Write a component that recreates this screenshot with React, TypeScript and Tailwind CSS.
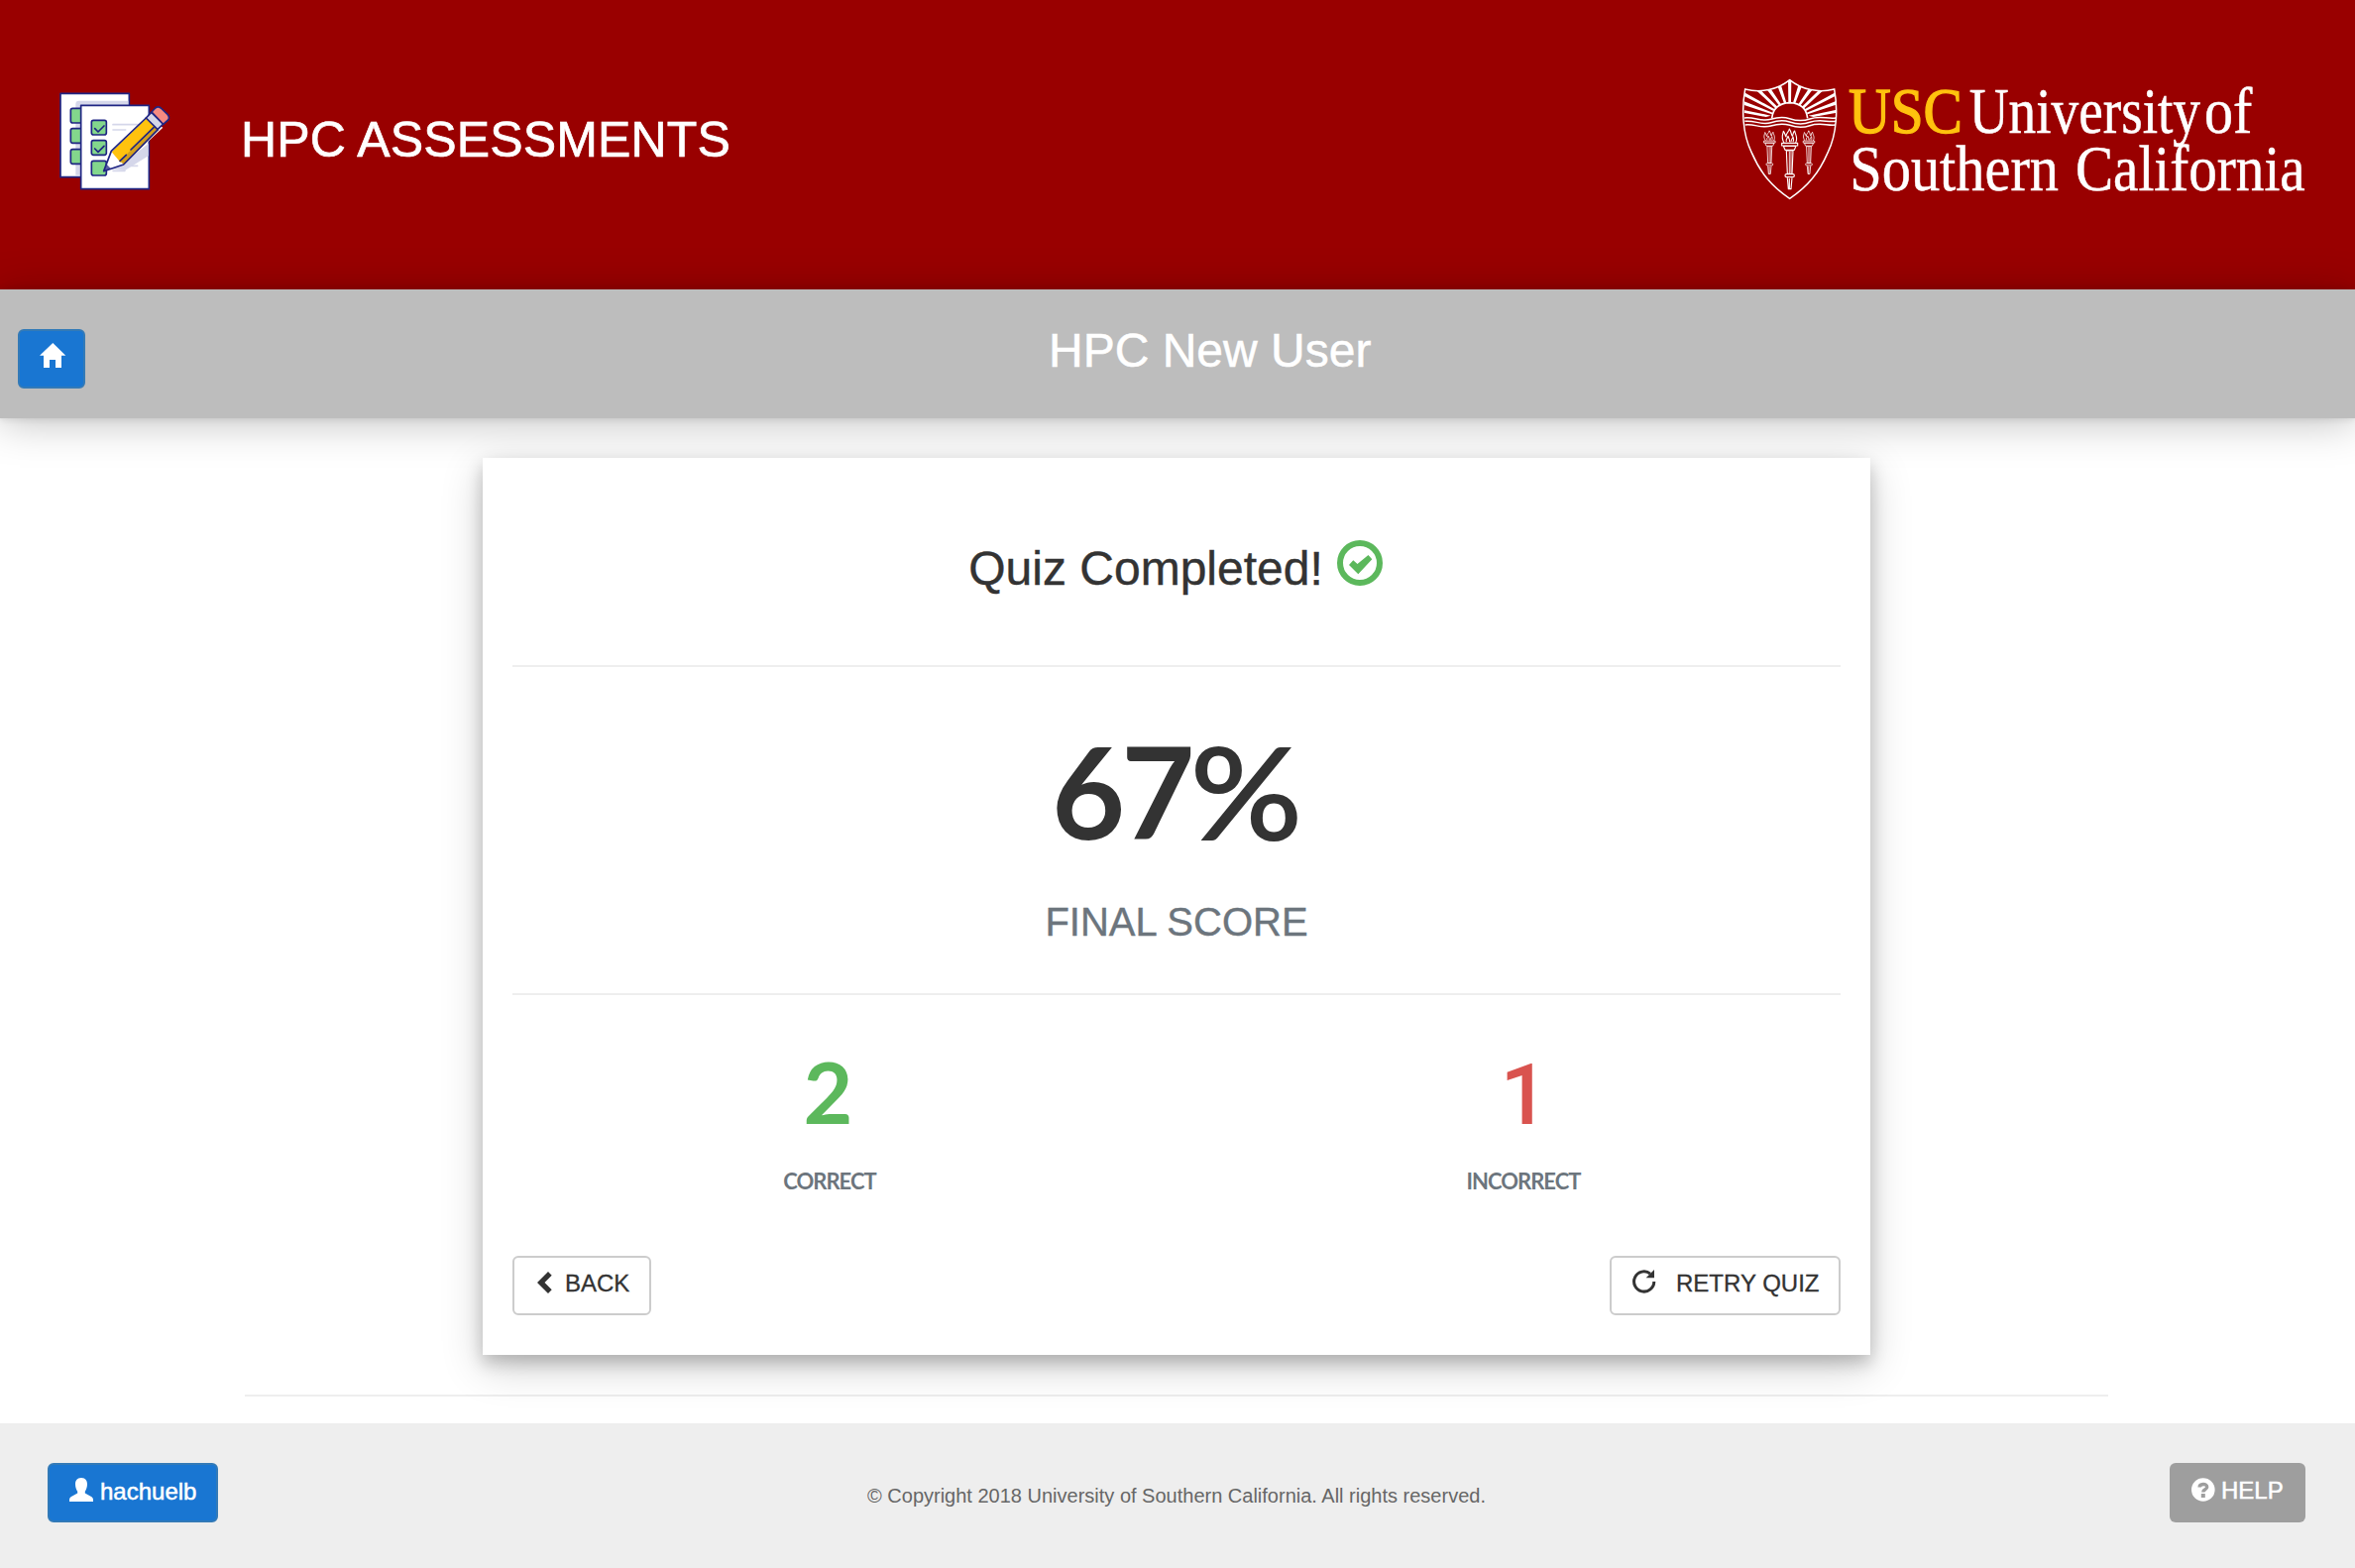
import React from "react";

function QuizLogo() {
  const boxes = [154, 215, 277];
  return (
    <svg width="150" height="140" viewBox="0 0 450 420" fill="none" stroke="#1f2583" strokeWidth="5" strokeLinejoin="round" strokeLinecap="round">
      <rect x="63" y="73" width="208" height="253" fill="#fff" />
      <path d="M109 320V105Q109 95 119 95H268V108H124V320Z" fill="#d5d7ea" stroke="none" />
      {[118, 179, 242].map((y) => (
        <rect key={y} x="94" y={y} width="50" height="44" rx="6" fill="#83d78c" />
      ))}
      <rect x="125" y="109" width="206" height="253" fill="#fff" />
      <path d="M222 167H298M222 183H260M222 292H296M222 307H258" stroke="#d5d7ea" />
      <path d="M329 225V262L258 306L205 300L250 285Z" fill="#d5d7ea" stroke="none" />
      {boxes.map((y) => (
        <rect key={y} x="157" y={y} width="45" height="44" rx="6" fill="#83d78c" />
      ))}
      <path d="M167 179L177 189L195 171M167 240L177 250L195 232" />
      <path d="M324 147L373 176L254 288L194 307L217 247Z" fill="#fff" stroke="none" />
      <path d="M324 147L356 177L245 282L218 250Z" fill="#ffc20e" stroke="none" />
      <path d="M346 172L360 184L256 288L243 278Z" fill="#d3a01c" stroke="none" />
      <path d="M203 287L216 301L194 309Z" fill="#5a5fa5" stroke="none" />
      <path d="M322 147L338 130L374 165L357 182Z" fill="#d5d7ea" />
      <path d="M339 129L350 117Q358 110 367 117L387 136Q395 145 389 153L374 166Z" fill="#f58a80" />
      <path d="M322 147L217 247L194 308L254 288L358 182" />
      <path d="M345 176L276 243M262 259L243 277" />
    </svg>
  );
}

function Torch({ x, y, s }: { x: number; y: number; s: number }) {
  return (
    <g transform={`translate(${x} ${y}) scale(${s})`} fill="none" stroke="#fff" strokeWidth="3.4" strokeLinejoin="round">
      <path d="M-17 40C-28 22 -20 14 -19 5C-14 12 -14 18 -11 22C-12 10 -2 8 -1 -2C6 8 3 14 8 20C11 14 10 8 15 4C17 16 26 24 18 40" />
      <path d="M-10 38C-14 28 -6 28 -5 20C-2 26 0 30 0 38M4 38C3 30 9 28 10 22C13 30 12 34 10 38" />
      <path d="M-24 41H24V49H-24ZM-19 50H19L14 62H-14Z" fill="#990000" />
      <path d="M-10 64L-7 134H7L10 64Z" />
      <path d="M-1 66V134M4 66V132" strokeWidth="2.6" />
      <rect x="-14" y="135" width="28" height="9" rx="4" />
      <path d="M-7 146L-4 180H4L7 146M-1 148V180" />
    </g>
  );
}

function UscLogo() {
  return (
    <svg width="630" height="140" viewBox="0 0 1890 420">
      <defs>
        <clipPath id="sky">
          <path d="M62 60C110 72 160 62 197 32C234 62 284 72 332 60Q338 100 338 145Q268 165 232 146Q197 130 160 146Q120 165 60 145Q57 100 62 60Z" />
        </clipPath>
      </defs>
      <g clipPath="url(#sky)" fill="#fff">
        <path d="M192 30H202L201 100H193ZM160 50L170 45L187 101L180 103ZM234 50L224 45L207 101L214 103ZM127 60L139 58L172 107L166 111ZM267 60L255 58L222 107L228 111ZM92 60L108 62L161 114L155 119ZM302 60L286 62L233 114L239 119ZM56 68L58 80L148 126L152 121ZM338 68L336 80L246 126L242 121ZM54 95L54 106L143 136L146 131ZM340 95L340 106L251 136L248 131ZM54 122V131L125 144L140 140ZM340 122V131L269 144L254 140Z" />
      </g>
      <path d="M143 148Q148 103 197 101Q246 103 251 148" fill="none" stroke="#fff" strokeWidth="5" />
      <g fill="none" stroke="#fff" strokeWidth="4.5">
        <path d="M60 147C90 143 112 160 140 151C165 143 178 143 197 149C220 157 235 158 258 150C290 139 310 151 337 147" />
        <path d="M61 157C90 153 112 170 140 161C165 153 178 153 197 159C220 167 235 168 258 160C290 149 310 161 337 157" />
        <path d="M62 168C90 164 112 180 140 171C165 163 178 163 197 169C220 177 235 178 258 170C290 159 310 171 335 168" />
        <path d="M62 60C110 72 160 62 197 32C234 62 284 72 332 60C343 120 340 195 313 250C285 315 250 356 197 391C144 356 109 315 81 250C54 195 51 120 62 60Z" />
      </g>
      <Torch x={197} y={182} s={1} />
      <Torch x={136} y={187} s={0.72} />
      <Torch x={255} y={187} s={0.72} />
      <g fontFamily="'Liberation Serif', serif" fontSize="196">
        <text x="375" y="192" fill="#ffc20e" stroke="#ffc20e" strokeWidth="4" textLength="345" lengthAdjust="spacingAndGlyphs">USC</text>
        <g fill="#fff" stroke="#fff" strokeWidth="1.5">
          <text x="740" y="192" textLength="700" lengthAdjust="spacingAndGlyphs">University</text>
          <text x="1452" y="192" textLength="145" lengthAdjust="spacingAndGlyphs">of</text>
          <text x="379" y="366" textLength="632" lengthAdjust="spacingAndGlyphs">Southern</text>
          <text x="1062" y="366" textLength="695" lengthAdjust="spacingAndGlyphs">California</text>
        </g>
      </g>
    </svg>
  );
}

export default function App() {
  return (
    <div className="flex h-[1582px] w-[2376px] flex-col overflow-hidden bg-white font-['Liberation_Sans',Arial,sans-serif] text-[#333333]">
      <header className="flex h-[292px] shrink-0 items-start justify-between bg-[#990000] pl-10 pt-[70px]">
        <div className="flex items-start">
          <QuizLogo />
          <h1 className="ml-[53px] mt-[43px] whitespace-nowrap text-[50px] leading-[56px] tracking-[0.15px] text-white [-webkit-text-stroke:0.7px_white]">HPC ASSESSMENTS</h1>
        </div>
        <div className="mr-[6px]">
          <UscLogo />
        </div>
      </header>

      <nav className="relative flex h-[130px] shrink-0 items-start bg-[#bdbdbd] pl-[18px] shadow-[0_0_8px_rgba(0,0,0,0.12),0_4px_40px_rgba(0,0,0,0.25)]">
        <button className="mt-10 flex h-[60px] w-[68px] items-start rounded-md border-2 border-[#337ab7] bg-[#1976d2] pl-5 pt-3">
          <svg width="27" height="25" viewBox="0 0 27 25" fill="#fff">
            <path d="M13.3 0L26.3 12.8H22V25H16V17H10V25H4V12.8H0Z" />
          </svg>
        </button>
        <h2 className="ml-[972px] mt-[36px] whitespace-nowrap text-[48px] leading-[52px] text-white [-webkit-text-stroke:0.5px_white]">HPC New User</h2>
      </nav>

      <main className="flex h-[1014px] shrink-0 flex-col items-center pr-[2px] pt-10">
        <section className="relative flex h-[905px] w-[1400px] shrink-0 flex-col bg-white shadow-[0_8px_16px_rgba(0,0,0,0.2),0_12px_40px_rgba(0,0,0,0.19)]">
          <div className="mx-[30px] flex h-[211px] items-start justify-center border-b-2 border-[#eeeeee] pr-[2px] pt-[86px]">
            <h2 className="whitespace-nowrap text-[48px] leading-[52px] [-webkit-text-stroke:0.4px_#333333]">Quiz Completed!</h2>
            <svg className="ml-[14px] mt-[-3px]" width="46" height="46" viewBox="0 0 46 46" fill="#5cb85c">
              <circle cx="23" cy="23" r="20" fill="none" stroke="#5cb85c" strokeWidth="6" />
              <path d="M12 25L16.3 20.3L20.5 24L31.5 15L35.3 19.3L21.3 34.3Z" />
            </svg>
          </div>
          <div className="mx-[30px] flex h-[331px] flex-col items-center border-b-2 border-[#eeeeee] pt-[55px]">
            <div className="whitespace-nowrap pr-[9px] font-['Lato',sans-serif] text-[128px] font-bold leading-[140px]">
              <span className="tracking-[-4px]">67</span>
              <span className="inline-block origin-left scale-x-110 font-normal [-webkit-text-stroke:2px_#333333]">%</span>
            </div>
            <div className="mt-10 whitespace-nowrap text-[40px] leading-[44px] text-[#6c757d] [-webkit-text-stroke:0.4px_#6c757d]">FINAL SCORE</div>
          </div>
          <div className="grid h-[263px] grid-cols-2 pt-[51px] text-center font-['Lato',sans-serif] font-bold">
            <div>
              <div className="pr-[3px] text-[86px] leading-[92px] text-[#5cb85c]">2</div>
              <div className="mt-8 text-[22px] leading-[26px] tracking-[-1px] text-[#6c757d]">CORRECT</div>
            </div>
            <div>
              <div className="pl-[2px] pt-[4px] font-['Roboto',sans-serif] text-[86px] font-medium leading-[92px] text-[#d9534f]">1</div>
              <div className="mt-7 text-[22px] leading-[26px] tracking-[-1px] text-[#6c757d]">INCORRECT</div>
            </div>
          </div>
          <div className="mx-[30px] flex justify-between text-[24px] leading-[36px]">
            <button className="flex h-[60px] w-[140px] items-start whitespace-nowrap rounded-md border-2 border-[#cccccc] pl-[23px] pt-2">
              <svg className="mt-[6px]" width="15" height="22" viewBox="0 0 15 22" fill="#333">
                <path d="M0 11L11 0L14.7 3.7L7.5 11L14.7 18.3L11 22Z" />
              </svg>
              <span className="ml-[13px] [-webkit-text-stroke:0.3px_#333333]">BACK</span>
            </button>
            <button className="flex h-[60px] w-[233px] items-start whitespace-nowrap rounded-md border-2 border-[#cccccc] pl-[21px] pt-2">
              <svg className="mt-1" width="24" height="24" viewBox="0 0 24 24" fill="none">
                <path d="M21.8 12A10.1 10.1 0 1 1 18 4.1" stroke="#333" strokeWidth="3" />
                <path d="M22 0V8.3H13.7Z" fill="#333" />
              </svg>
              <span className="ml-5 [-webkit-text-stroke:0.3px_#333333]">RETRY QUIZ</span>
            </button>
          </div>
        </section>
        <div className="mt-10 h-[2px] w-[1880px] bg-[#eeeeee]" />
      </main>

      <footer className="flex h-[146px] shrink-0 items-start justify-between bg-[#eeeeee] pl-12 pr-[50px] pt-10 text-[24px] leading-[36px] text-white">
        <button className="flex h-[60px] w-[172px] items-start whitespace-nowrap rounded-md border-2 border-[#337ab7] bg-[#1976d2] pl-5 pt-2">
          <svg className="mt-[5px]" width="24" height="24" viewBox="0 0 24 24" fill="#fff">
            <path d="M12 0C16.5 0 18 3 18 6.5C18 10 16.8 12 15.8 13.8V15.6L22.5 19.2Q24 20.2 24 22V24H0V22Q0 20.2 1.5 19.2L8.2 15.6V13.8C7.2 12 6 10 6 6.5C6 3 7.5 0 12 0Z" />
          </svg>
          <span className="ml-[7px] mt-px [-webkit-text-stroke:0.5px_white]">hachuelb</span>
        </button>
        <p className="mr-[35px] mt-5 whitespace-nowrap text-[20px] leading-[26px] text-[#666666]">© Copyright 2018 University of Southern California. All rights reserved.</p>
        <button className="flex h-[60px] w-[137px] items-start whitespace-nowrap rounded-md bg-[#9e9e9e] pl-[22px] pt-[10px]">
          <svg className="mt-[5px]" width="24" height="24" viewBox="0 0 24 24" fill="none">
            <circle cx="11.8" cy="12" r="11.8" fill="#fff" />
            <path d="M8.1 9.6C8.1 5.7 15.7 5.4 15.7 9.3C15.7 12 11.8 11.4 11.8 14.4" stroke="#9e9e9e" strokeWidth="3.4" />
            <rect x="9.8" y="16" width="4" height="4" fill="#9e9e9e" />
          </svg>
          <span className="ml-[6px] [-webkit-text-stroke:0.5px_white]">HELP</span>
        </button>
      </footer>
    </div>
  );
}
